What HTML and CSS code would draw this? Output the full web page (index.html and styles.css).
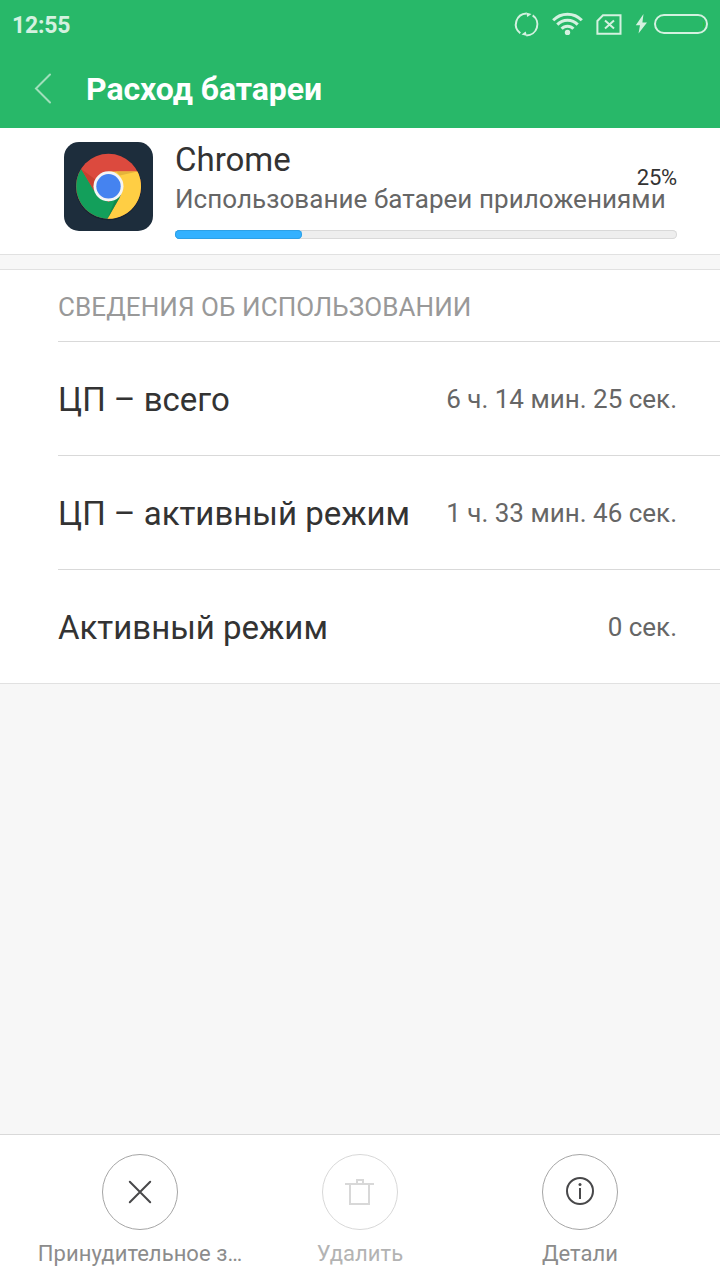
FILE: index.html
```
<!DOCTYPE html>
<html lang="ru">
<head>
    <meta charset="UTF-8">
    <meta name="viewport" content="width=device-width, initial-scale=1.0">
    <title>Расход батареи</title>
    <link rel="stylesheet" href="styles.css">
</head>
<body>

<div class="screen">
    <header class="header">
        <div class="status-bar">
            <span class="clock">12:55</span>
            <!-- sync, wifi, no sim, charging, battery -->
            <svg class="status-icons" width="200" height="30" viewBox="0 0 200 30" fill="none" stroke="#d4f1e0" stroke-width="2">
                <path d="M10.3 24.2 A11 11 0 0 1 16.4 4.4 M22.7 6.4 A11 11 0 0 1 16.4 26.4"/>
                <path d="M16 3.5 L21.5 5 L17.3 8 Z M17 27 L11.5 25.5 L15.7 22.5 Z" fill="#d4f1e0" stroke="none"/>
                <path d="M43.2 11.2 A20 20 0 0 1 71.8 11.2 M47.3 15.6 A14 14 0 0 1 67.7 15.6 M51.6 19.8 A8 8 0 0 1 63.4 19.8" stroke-width="3"/>
                <circle cx="57.5" cy="23.4" r="2.7" fill="#d4f1e0" stroke="none"/>
                <path d="M93 6.3 H110.5 V24.7 H87.4 V12 Z"/>
                <path d="M95 11.5 L104 19.5 M104 11.5 L95 19.5"/>
                <path d="M133.5 5 L125.8 16.3 H130 L128.5 24.5 L137 13.5 H132.4 Z" fill="#d4f1e0" stroke="none"/>
                <rect x="145" y="6" width="52" height="18" rx="9"/>
                <path d="M193.5 13 V18" stroke="#27c33a" stroke-width="1"/>
            </svg>
        </div>
        <div class="title-bar">
            <svg class="back" width="20" height="32" viewBox="0 0 20 32" fill="none" stroke="#a0dfbb" stroke-width="2" stroke-linecap="round">
                <path d="M17 1.5 L3 15.5 L17 29.5"/>
            </svg>
            <h1>Расход батареи</h1>
        </div>
    </header>

    <section class="app">
        <svg class="app-icon" width="89" height="89" viewBox="0 0 89 89">
            <rect width="89" height="89" rx="15" fill="#1d2d3c"/>
            <circle cx="44.5" cy="45.2" r="33" fill="#162431"/>
            <circle cx="44.5" cy="44.3" r="32.5" fill="#dc4a3e"/>
            <path d="M17.2 27 A32.5 32.5 0 0 0 43.5 76.8 L57.5 52 L44.5 60 L30 48.5 Z" fill="#139f5b"/>
            <path d="M44.5 29.6 H73.5 A32.5 32.5 0 0 1 43.5 76.8 L57 53 Z" fill="#ffce44"/>
            <path d="M17.2 27 L30 48.5 L32 38 Z" fill="#c9402f"/>
            <path d="M52 29.6 H73.5 L56 33.5 Z" fill="#e5b33b"/>
            <path d="M56 55 L43.5 76.8 L51 57.5 Z" fill="#0f8a4d"/>
            <circle cx="44.5" cy="44.3" r="15" fill="#f5f5f5"/>
            <circle cx="44.5" cy="44.3" r="12.2" fill="#4583f0"/>
        </svg>
        <div class="app-info">
            <div class="app-top">
                <span class="app-name">Chrome</span>
                <span class="percent">25%</span>
            </div>
            <div class="app-desc">Использование батареи приложениями</div>
            <div class="progress"><div class="progress-fill" style="width: 25.2%"></div></div>
        </div>
    </section>

    <section class="usage">
        <h2>СВЕДЕНИЯ ОБ ИСПОЛЬЗОВАНИИ</h2>
        <div class="row">
            <span class="label">ЦП – всего</span>
            <span class="value">6 ч. 14 мин. 25 сек.</span>
        </div>
        <div class="row">
            <span class="label">ЦП – активный режим</span>
            <span class="value">1 ч. 33 мин. 46 сек.</span>
        </div>
        <div class="row">
            <span class="label">Активный режим</span>
            <span class="value">0 сек.</span>
        </div>
    </section>

    <footer class="actions">
        <div class="action">
            <svg width="76" height="76" viewBox="0 0 76 76" fill="none" stroke="#48484a" stroke-width="2">
                <circle cx="38" cy="38" r="37.5" stroke="#a5a5a5" stroke-width="1"/>
                <path d="M27.8 27.8 L48.2 48.2 M48.2 27.8 L27.8 48.2" stroke-linecap="round"/>
            </svg>
            <span>Принудительное з…</span>
        </div>
        <div class="action disabled">
            <svg width="76" height="76" viewBox="0 0 76 76" fill="none" stroke="#d8d8d8" stroke-width="2">
                <circle cx="38" cy="38" r="37.5" stroke-width="1"/>
                <path d="M23 30 H52 M28 30 V50 H47 V30 M35 30 V26 H41 V30"/>
            </svg>
            <span>Удалить</span>
        </div>
        <div class="action">
            <svg width="76" height="76" viewBox="0 0 76 76" fill="none" stroke="#48484a" stroke-width="2">
                <circle cx="38" cy="38" r="37.5" stroke="#a5a5a5" stroke-width="1"/>
                <circle cx="38" cy="37" r="13"/>
                <path d="M38 34 V45"/>
                <circle cx="38" cy="30.5" r="1.5" fill="#48484a" stroke="none"/>
            </svg>
            <span>Детали</span>
        </div>
    </footer>
</div>

</body>
</html>
```
FILE: styles.css
```
* {
    box-sizing: border-box;
}

body {
    margin: 0;
    font-family: Roboto, "Noto Sans", sans-serif;
    background-color: #f7f7f7;
    color: #333;
}

.screen {
    display: flex;
    flex-direction: column;
    width: 720px;
    height: 1280px;
    overflow: hidden;
}

/* Green header */
.header {
    height: 128px;
    background-color: #28b869;
}

.status-bar {
    display: flex;
    justify-content: space-between;
    height: 50px;
    padding: 9px 10px 0 12px;
}

.clock {
    font-size: 23px;
    font-weight: bold;
    line-height: 34px;
    letter-spacing: -0.2px;
    color: #d4f1e0;
}

.title-bar {
    display: flex;
    align-items: center;
    height: 78px;
    padding-left: 33px;
}

h1 {
    margin: 0 0 0 33px;
    font-size: 32px;
    font-weight: bold;
    letter-spacing: -0.05px;
    color: #fff;
}

/* App summary */
.app {
    display: flex;
    height: 127px;
    padding: 11px 43px 0 64px;
    background-color: #fff;
    border-bottom: 1px solid #e1e1e1;
}

.app-icon {
    flex-shrink: 0;
    margin: 3px 22px 0 0;
}

.app-info {
    flex: 1;
}

.app-top {
    display: flex;
    justify-content: space-between;
    align-items: flex-end;
    height: 40px;
}

.app-name {
    font-size: 33px;
    line-height: 38px;
}

.percent {
    margin-bottom: -11px;
    font-size: 22px;
    line-height: 24px;
    letter-spacing: -0.2px;
}

.app-desc {
    font-size: 26px;
    line-height: 40px;
    letter-spacing: 0.05px;
    white-space: nowrap;
    color: #666;
}

.progress {
    height: 9px;
    margin-top: 11px;
    border-radius: 5px;
    background-color: #eee;
    box-shadow: inset 0 0 0 1px #d9d9d9;
}

.progress-fill {
    height: 100%;
    border-radius: 5px;
    background-color: #33b1ff;
    box-shadow: inset 0 0 0 1px #2ea0e6;
}

/* Usage list */
.usage {
    margin-top: 14px;
    padding-left: 58px;
    background-color: #fff;
    border-top: 1px solid #e1e1e1;
    border-bottom: 1px solid #e1e1e1;
}

h2 {
    height: 71px;
    margin: 0;
    font-size: 26px;
    font-weight: normal;
    line-height: 74px;
    letter-spacing: 0.08px;
    color: #999;
}

.row {
    display: flex;
    justify-content: space-between;
    align-items: center;
    height: 114px;
    padding-right: 43px;
    border-top: 1px solid #d9d9d9;
}

.label {
    padding-top: 2px;
    font-size: 33px;
}

.value {
    font-size: 26px;
    color: #666;
}

/* Bottom buttons */
.actions {
    display: flex;
    justify-content: center;
    height: 146px;
    margin-top: auto;
    padding-top: 19px;
    background-color: #fff;
    border-top: 1px solid #d9d9d9;
}

.action {
    display: flex;
    flex-direction: column;
    align-items: center;
    width: 220px;
    font-size: 22px;
    line-height: 28px;
    letter-spacing: 0.05px;
    color: #8c8c8c;
}

.action span {
    margin-top: 10px;
    white-space: nowrap;
}

.disabled {
    color: #b3b3b3;
}
```
